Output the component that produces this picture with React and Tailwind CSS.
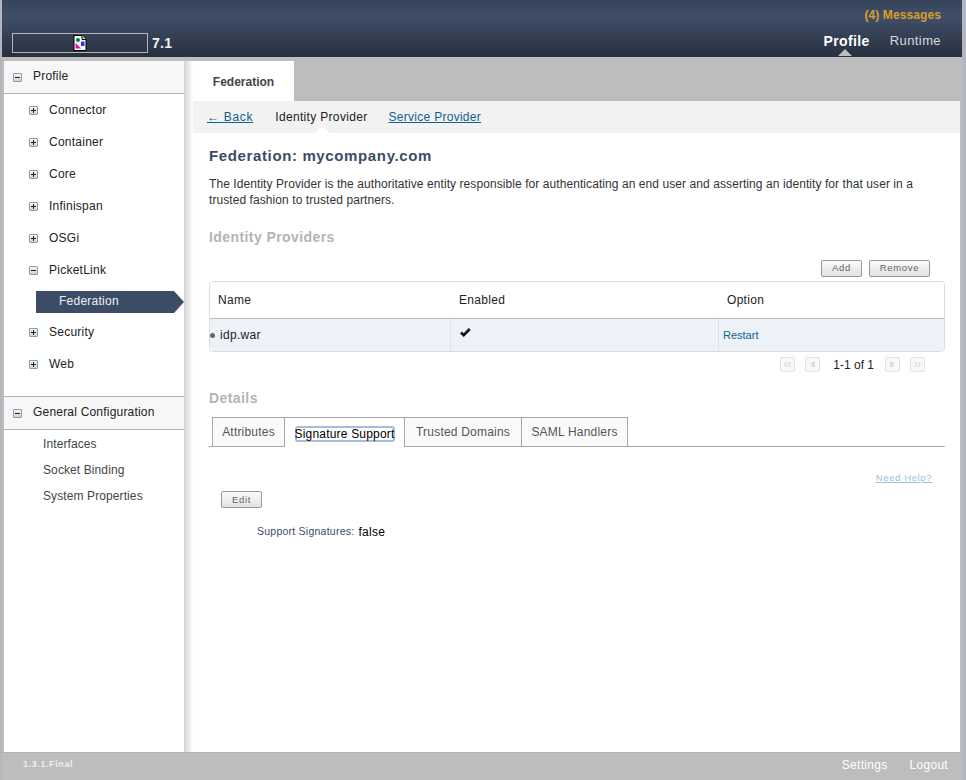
const font = { fontFamily: '"Liberation Sans", Arial, sans-serif' };

function Toggle({ open }) {
  return (
    <span className="relative w-[9px] h-[9px] shrink-0 border border-[#7ba3bd] bg-gradient-to-b from-[#f4f4f4] to-[#d2d2d2] rounded-[1px] block">
      <span className="absolute left-[1px] right-[1px] top-[3px] h-[1px] bg-[#222]" />
      {!open && <span className="absolute top-[1px] bottom-[1px] left-[3px] w-[1px] bg-[#222]" />}
    </span>
  );
}

function SectionHead({ label }) {
  return (
    <div className="h-[33px] flex items-center bg-[#f7f7f7] border-b border-[#b3b3b3] pl-[9px]">
      <Toggle open />
      <span className="ml-[11px] mb-[2px] text-[12px] tracking-[0.2px] text-[#222]">{label}</span>
    </div>
  );
}

function TreeItem({ label, open }) {
  return (
    <div className="h-[32px] flex items-center pl-[25px]">
      <Toggle open={open} />
      <span className="ml-[11px] text-[12px] tracking-[0.25px] text-[#222]">{label}</span>
    </div>
  );
}

function PagerBtn({ d }) {
  return (
    <span className="w-[15px] h-[15px] border border-[#e4e4e4] rounded-[2px] flex items-center justify-center bg-[#f8f8f8]">
      <svg width="9" height="9" viewBox="0 0 9 9" fill="none" stroke="#c8c8c8" strokeWidth="1">
        <path d={d} />
      </svg>
    </span>
  );
}

function SmallBtn({ children, className }) {
  return (
    <span
      className={
        "h-[17px] flex items-center justify-center border border-[#9a9a9a] rounded-[2px] bg-gradient-to-b from-[#fafafa] to-[#e2e2e2] text-[9.5px] tracking-[0.7px] text-[#666] " +
        className
      }
    >
      {children}
    </span>
  );
}

function Tab({ children, w }) {
  return (
    <div
      className="h-[30px] flex items-center justify-center border border-[#a8a8a8] border-l-0 first:border-l text-[12px] tracking-[0.2px] text-[#555] bg-[#fafafa]"
      style={{ width: w }}
    >
      {children}
    </div>
  );
}

export default function App() {
  return (
    <div className="w-[966px] h-[780px] overflow-hidden flex flex-col bg-[#bdbdbd] border-l-2 border-r-4 border-[#b3b6c1]" style={font}>
      <header className="h-[57px] shrink-0 bg-gradient-to-b from-[#36445b] via-[#404f68] via-30% to-[#27303f] flex justify-between relative">
        <div className="flex items-center pl-[10px] pt-[29px] h-full">
          <div className="w-[136px] h-[20px] border border-[#b5b5b5] flex items-center justify-center">
            <svg width="14" height="16" viewBox="0 0 14 16">
              <path d="M1 .5h8l4 4v11H1z" fill="#fff" stroke="#000" />
              <path d="M9 .5v4h4" fill="#ddd" stroke="#000" />
              <circle cx="5" cy="5" r="2" fill="#0a7a2a" />
              <path d="M2.5 13.5V8l5.5 5.5z" fill="#e0109a" />
              <rect x="8" y="6.5" width="3.5" height="4.5" fill="#2040e0" />
            </svg>
          </div>
          <span className="ml-[4px] text-[14px] font-bold tracking-[0.3px] text-[#f2f2f2]">7.1</span>
        </div>
        <div className="flex flex-col items-end pr-[21px]">
          <span className="mt-[8px] text-[12px] leading-[14px] font-bold tracking-[0.1px] text-[#d99e2b]">(4) Messages</span>
          <div className="mt-[11px] flex items-center gap-[20px] relative">
            <span className="text-[14px] leading-[16px] font-bold tracking-[0.4px] text-white">Profile</span>
            <span className="text-[13px] leading-[16px] tracking-[0.4px] text-[#d5d8de]">Runtime</span>
            <span className="absolute left-[15px] top-[16px] w-0 h-0 border-x-[7px] border-x-transparent border-b-[7px] border-b-[#bdbdbd]" />
          </div>
        </div>
      </header>

      <div className="flex-1 min-h-0 flex pt-[4px] pl-[2px] pr-[2px]">
        <aside className="w-[180px] shrink-0 bg-white">
          <SectionHead label="Profile" />
          <div>
            <TreeItem label="Connector" />
            <TreeItem label="Container" />
            <TreeItem label="Core" />
            <TreeItem label="Infinispan" />
            <TreeItem label="OSGi" />
            <TreeItem label="PicketLink" open />
            <div className="mt-[5px] ml-[32px] h-[22px] flex items-center relative bg-[#3c4c66] mr-[10px] pl-[23px] text-[12px] tracking-[0.25px] text-[#eef0f3]">
              <span className="mb-[2px]">Federation</span>
              <span className="absolute right-[-10px] top-0 w-0 h-0 border-y-[11px] border-y-transparent border-l-[10px] border-l-[#3c4c66]" />
            </div>
            <div className="h-[3px]" />
            <TreeItem label="Security" />
            <TreeItem label="Web" />
          </div>
          <div className="mt-[16px] border-t border-[#b3b3b3]">
            <SectionHead label="General Configuration" />
          </div>
          <div className="pl-[39px] pt-[1px] text-[12px] tracking-[0.1px] text-[#444]">
            <div className="h-[26px] flex items-center">Interfaces</div>
            <div className="h-[26px] flex items-center">Socket Binding</div>
            <div className="h-[26px] flex items-center">System Properties</div>
          </div>
        </aside>

        <div className="w-[9px] shrink-0 bg-gradient-to-r from-[#d4d4d4] to-[#ffffff]" />

        <main className="flex-1 min-w-0 flex flex-col">
          <div className="h-[40px] shrink-0 flex">
            <div className="w-[101px] bg-white flex items-center justify-center pt-[1px] text-[12px] font-bold text-[#444]">
              Federation
            </div>
          </div>
          <div className="flex-1 min-h-0 bg-white">
            <div className="h-[32px] bg-[#f2f2f2] flex items-center pl-[14px] text-[12px] tracking-[0.33px] relative">
              <a className="text-[#11618f] underline tracking-[0.7px]">← Back</a>
              <span className="ml-[22px] text-[#222]">Identity Provider</span>
              <a className="ml-[21px] text-[#11618f] underline tracking-[0.28px]">Service Provider</a>
              <span className="absolute left-[122px] bottom-0 w-0 h-0 border-x-[7px] border-x-transparent border-b-[7px] border-b-white" />
            </div>

            <div className="pl-[16px] pr-[15px]">
              <h1 className="mt-[14px] text-[15px] leading-[18px] font-bold tracking-[0.63px] text-[#3c4c66]">Federation: mycompany.com</h1>
              <p className="mt-[11px] text-[12px] leading-[16px] tracking-[0.075px] text-[#333] pr-[4px]">
                The Identity Provider is the authoritative entity responsible for authenticating an end user and asserting an identity for that user in a trusted fashion to trusted partners.
              </p>
              <h2 className="mt-[21px] text-[14px] leading-[17px] font-bold tracking-[0.42px] text-[#b4b4b4]">Identity Providers</h2>

              <div className="mt-[14px] flex justify-end gap-[7px] pr-[15px]">
                <SmallBtn className="w-[41px]">Add</SmallBtn>
                <SmallBtn className="w-[61px]">Remove</SmallBtn>
              </div>

              <div className="mt-[4px] border border-[#dcdcdc] rounded-[4px] overflow-hidden text-[12px]">
                <div className="h-[37px] flex items-center border-b border-[#bdbdbd] tracking-[0.3px] text-[#222] bg-white">
                  <div className="w-[241px] pl-[8px]">Name</div>
                  <div className="w-[268px] pl-[8px]">Enabled</div>
                  <div className="pl-[8px]">Option</div>
                </div>
                <div className="h-[32px] flex bg-[#edf2f9] text-[#222]">
                  <div className="w-[241px] flex items-center border-r border-[#dfe3e8] relative pl-[10px] tracking-[0.3px]">
                    <span className="absolute left-0 w-[5px] h-[5px] rounded-full bg-[#666]" />
                    idp.war
                  </div>
                  <div className="w-[268px] flex items-center border-r border-[#dfe3e8] pl-[9px]">
                    <svg width="11" height="9" viewBox="0 0 11 9" className="mb-[5px]">
                      <path d="M1 4.5l2.7 2.7L9.8 1" fill="none" stroke="#111" strokeWidth="2.6" />
                    </svg>
                  </div>
                  <div className="flex items-center pl-[4px] text-[11px] text-[#11618f]">Restart</div>
                </div>
              </div>

              <div className="mt-[5px] h-[15px] flex items-center justify-end pr-[20px] text-[12px] text-[#222]">
                <PagerBtn d="M4 2L1.5 4.5 4 7M7.5 2L5 4.5 7.5 7" />
                <span className="w-[10px]" />
                <PagerBtn d="M6 2L3 4.5 6 7z" />
                <span className="ml-[13px] mr-[11px]">1-1 of 1</span>
                <PagerBtn d="M3 2l3 2.5L3 7z" />
                <span className="w-[10px]" />
                <PagerBtn d="M1.5 2L4 4.5 1.5 7M5 2l2.5 2.5L5 7" />
              </div>

              <h2 className="mt-[18px] text-[14px] leading-[17px] font-bold tracking-[0.42px] text-[#b4b4b4]">Details</h2>

              <div className="mt-[10px] flex border-b border-[#a8a8a8] pl-[3px] h-[30px] items-start">
                <Tab w={73}>Attributes</Tab>
                <div className="w-[120px] h-[30px] border-t border-r border-[#a8a8a8] bg-white flex items-center justify-center pt-[3px]">
                  <span className="h-[16px] w-[100px] flex items-center justify-center border-2 border-[#a6bcd8] rounded-[3px] text-[12px] tracking-[0.2px] text-black whitespace-nowrap">
                    Signature Support
                  </span>
                </div>
                <Tab w={117}>Trusted Domains</Tab>
                <Tab w={106}>SAML Handlers</Tab>
              </div>

              <div className="mt-[24px] pr-[13px] text-right text-[9.5px] tracking-[0.6px] text-[#8fc3dd] underline">Need Help?</div>

              <SmallBtn className="mt-[6px] ml-[12px] w-[41px]">Edit</SmallBtn>

              <div className="mt-[15px] ml-[48px] flex items-center">
                <span className="text-[10.5px] tracking-[0.24px] text-[#3c4c66]">Support Signatures:</span>
                <span className="ml-[4px] text-[12px] tracking-[0.3px] text-black">false</span>
              </div>
            </div>
          </div>
        </main>
      </div>

      <footer className="h-[28px] shrink-0 bg-[#bdbdbd] border-t border-[#aeb1ba] flex items-center justify-between pl-[21px] pr-[14px] pb-[3px] text-white">
        <span className="text-[9px] tracking-[0.6px] font-bold text-[#f0f0f0]">1.3.1.Final</span>
        <div className="flex gap-[22px] text-[12px] tracking-[0.3px]">
          <span>Settings</span>
          <span>Logout</span>
        </div>
      </footer>
    </div>
  );
}
